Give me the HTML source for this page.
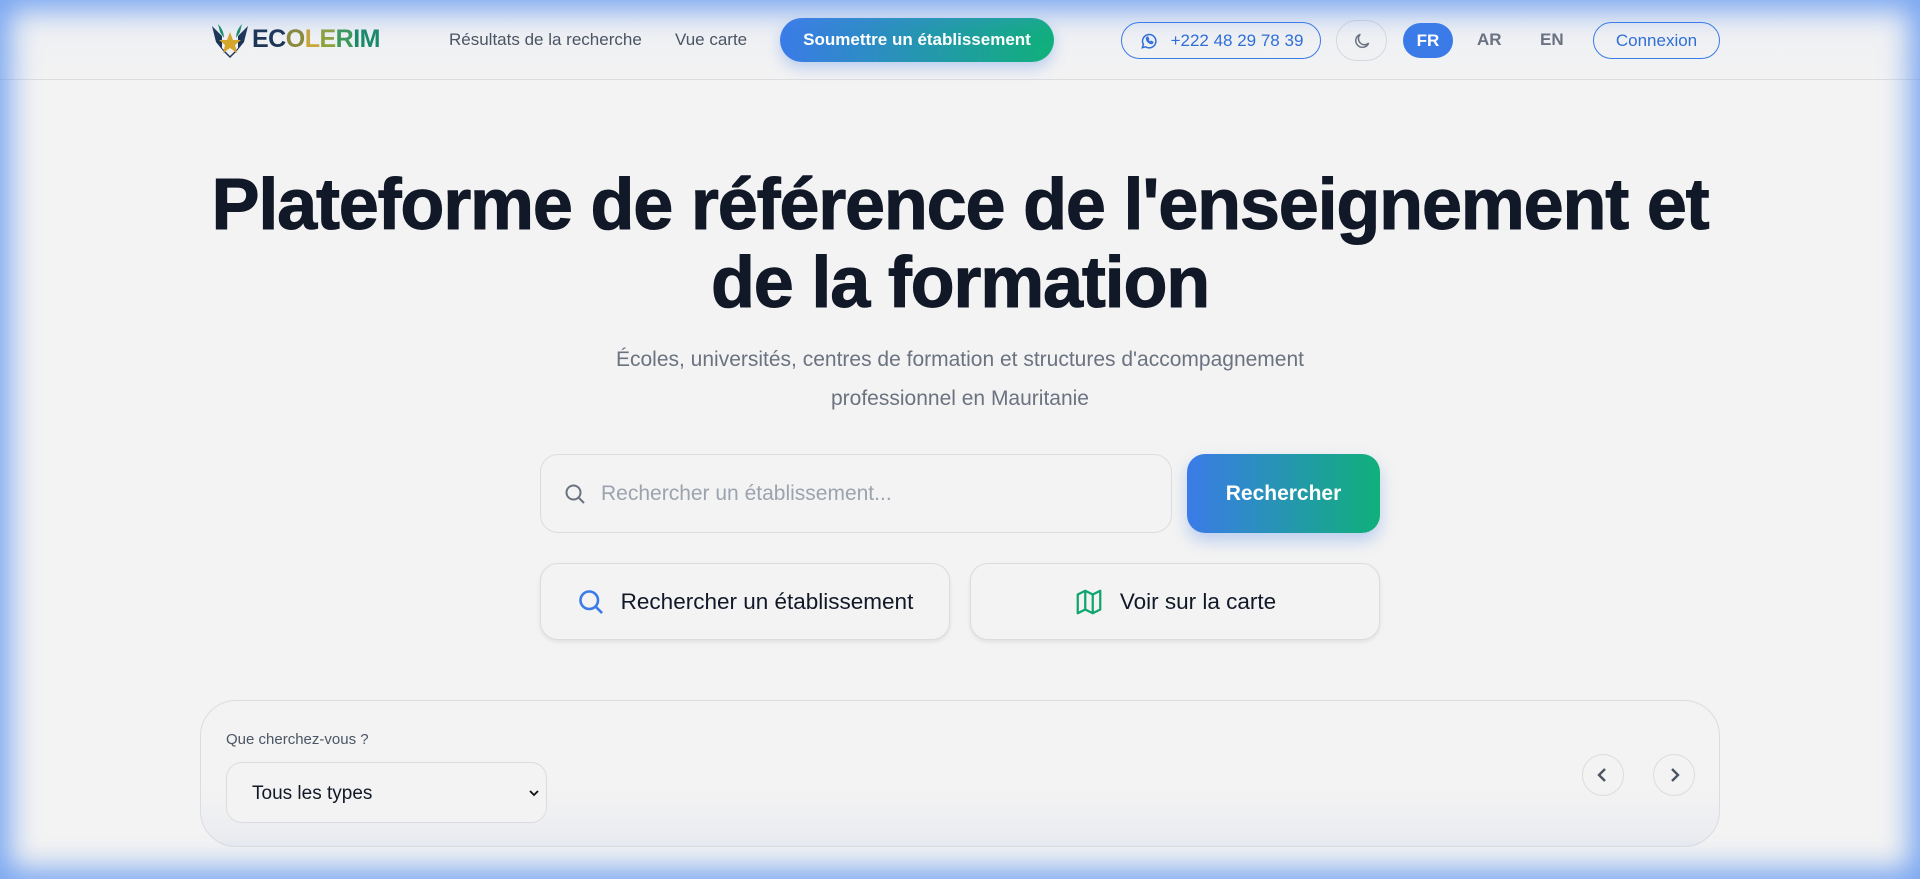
<!DOCTYPE html>
<html><head><meta charset="utf-8"><style>
*{box-sizing:border-box;margin:0;padding:0}
html,body{width:1920px;height:879px;overflow:hidden}
body{background:#f3f3f3;font-family:"Liberation Sans","DejaVu Sans",sans-serif;position:relative;color:#111827}
.glow{position:absolute;inset:0;box-shadow:inset 0 0 28px 10px rgba(80,140,240,.75);pointer-events:none;z-index:10}
header{position:absolute;left:0;top:0;width:1920px;height:80px;border-bottom:1px solid #dcdde1;background:linear-gradient(#eef0f4,#f2f2f3)}
.abs{position:absolute}
.nav{font-size:17px;color:#4b5563;top:30px}
.pill{position:absolute;border-radius:22px;display:flex;align-items:center;justify-content:center;font-size:17px}
h1{position:absolute;left:0;width:1920px;top:166px;text-align:center;font-size:72px;font-weight:700;line-height:78px;letter-spacing:-1.2px;color:#111827;-webkit-text-stroke:1px #111827}
.sub{position:absolute;left:0;width:1920px;top:340px;text-align:center;font-size:21px;line-height:39px;color:#6b7280}
.box{position:absolute;border:1.5px solid #dcdce0;background:#f3f3f3;border-radius:18px}
.card{position:absolute;border:1.5px solid #dcdce0;border-radius:18px;background:#f3f3f3;box-shadow:0 2px 4px rgba(0,0,0,.08);display:flex;align-items:center;justify-content:center;font-size:22.5px;color:#111827;gap:16px}
.grad{background:linear-gradient(90deg,#3b7be8,#10b07a);color:#fff}
</style></head><body>
<header>
 <svg class="abs" style="left:210px;top:22px" width="40" height="40" viewBox="0 0 40 40">
  <path d="M2 4 L12 14 L12 26 L20 34 L28 26 L28 14 L38 4 L34 20 L26 30 L20 36 L14 30 L6 20Z" fill="#1d3557"/>
  <path d="M8 2 Q14 8 14 16 L10 10Z M32 2 Q26 8 26 16 L30 10Z" fill="#1a8f6a"/>
  <path d="M20 10 L23 18 L31 18 L25 23 L27 31 L20 26 L13 31 L15 23 L9 18 L17 18Z" fill="#d4a72c"/>
 </svg>
 <div class="abs" style="left:252px;top:25px;font-size:25px;font-weight:700;letter-spacing:-.5px"><span style="color:#1d3557">EC</span><span style="color:#8a8a3a">O</span><span style="color:#c9a63a">L</span><span style="color:#8ea23c">E</span><span style="color:#3b9a5a">R</span><span style="color:#1a8a6a">IM</span></div>
 <div class="abs nav" style="left:449px">Résultats de la recherche</div>
 <div class="abs nav" style="left:675px">Vue carte</div>
 <div class="pill grad" style="left:780px;top:18px;width:274px;height:44px;font-weight:700;box-shadow:0 6px 14px rgba(59,123,232,.3)">Soumettre un établissement</div>
 <div class="pill" style="left:1121px;top:22px;width:200px;height:37px;border:1.5px solid #3b7be8;color:#2f6fd8;gap:12px">
  <svg width="20" height="20" viewBox="0 0 24 24" fill="none" stroke="#2f6fd8" stroke-width="1.8"><path d="M4 20l1.3-3.8A8 8 0 1 1 8 19z"/><path d="M9 8.5c0 3 3 6.5 6.5 6.5l1-1.5-2-1-1 1c-1.2-.5-2.5-1.8-3-3l1-1-1-2z"/></svg>+222 48 29 78 39</div>
 <div class="pill" style="left:1336px;top:20px;width:51px;height:41px;border:1.5px solid #d6d8de">
  <svg width="20" height="20" viewBox="0 0 24 24" fill="none" stroke="#6b7280" stroke-width="1.8"><path d="M20 14.5A8 8 0 1 1 10 4a6.5 6.5 0 0 0 10 10.5z"/></svg></div>
 <div class="pill" style="left:1403px;top:23px;width:50px;height:35px;background:#3b7be8;color:#fff;font-weight:700">FR</div>
 <div class="abs nav" style="left:1477px;color:#6b7280;font-weight:700;font-size:17px">AR</div>
 <div class="abs nav" style="left:1540px;color:#6b7280;font-weight:700;font-size:17px">EN</div>
 <div class="pill" style="left:1593px;top:22px;width:127px;height:37px;border:1.5px solid #3b7be8;color:#2f6fd8">Connexion</div>
</header>
<h1>Plateforme de référence de l'enseignement et<br>de la formation</h1>
<div class="sub">Écoles, universités, centres de formation et structures d'accompagnement<br>professionnel en Mauritanie</div>
<div class="box" style="left:540px;top:454px;width:632px;height:79px;display:flex;align-items:center;padding-left:22px;gap:14px;font-size:21px;color:#9ca3af">
 <svg width="24" height="24" viewBox="0 0 24 24" fill="none" stroke="#6b7280" stroke-width="2"><circle cx="10.5" cy="10.5" r="7"/><path d="M16 16l5 5"/></svg>Rechercher un établissement...</div>
<div class="pill grad" style="left:1187px;top:454px;width:193px;height:79px;border-radius:18px;font-size:21px;font-weight:700;box-shadow:0 8px 16px rgba(59,123,232,.3)">Rechercher</div>
<div class="card" style="left:540px;top:563px;width:410px;height:77px">
 <svg width="28" height="28" viewBox="0 0 24 24" fill="none" stroke="#3b7be8" stroke-width="2.2"><circle cx="10.5" cy="10.5" r="7.5"/><path d="M16 16l5.5 5.5"/></svg>Rechercher un établissement</div>
<div class="card" style="left:970px;top:563px;width:410px;height:77px">
 <svg width="30" height="30" viewBox="0 0 24 24" fill="none" stroke="#10a56e" stroke-width="1.8" stroke-linejoin="round"><path d="M3 6l6-3 6 3 6-3v15l-6 3-6-3-6 3z"/><path d="M9 3v15M15 6v15"/></svg>Voir sur la carte</div>
<div class="box" style="left:200px;top:700px;width:1520px;height:147px;border-radius:36px;background:linear-gradient(#f3f3f3 60%,#e9ebf0)">
 <div class="abs" style="left:25px;top:30px;font-size:15px;color:#4b5563">Que cherchez-vous ?</div>
 <div class="abs" style="left:25px;top:61px;width:321px;height:61px;border:1.5px solid #dcdce0;border-radius:16px;background:#f3f3f3;font-size:19px;color:#111827;padding:20px 0 0 25px">Tous les types
  <svg class="abs" style="right:6px;top:24px" width="12" height="12" viewBox="0 0 12 12" fill="none" stroke="#111" stroke-width="1.8"><path d="M2 4l4 4 4-4"/></svg></div>
 <div class="pill" style="left:1381px;top:53px;width:42px;height:42px;border:1.5px solid #dcdce0">
  <svg width="16" height="16" viewBox="0 0 16 16" fill="none" stroke="#4b5563" stroke-width="2.4"><path d="M10 2L4 8l6 6"/></svg></div>
 <div class="pill" style="left:1452px;top:53px;width:42px;height:42px;border:1.5px solid #dcdce0">
  <svg width="16" height="16" viewBox="0 0 16 16" fill="none" stroke="#4b5563" stroke-width="2.4"><path d="M6 2l6 6-6 6"/></svg></div>
</div>
<div class="glow"></div>
</body></html>
